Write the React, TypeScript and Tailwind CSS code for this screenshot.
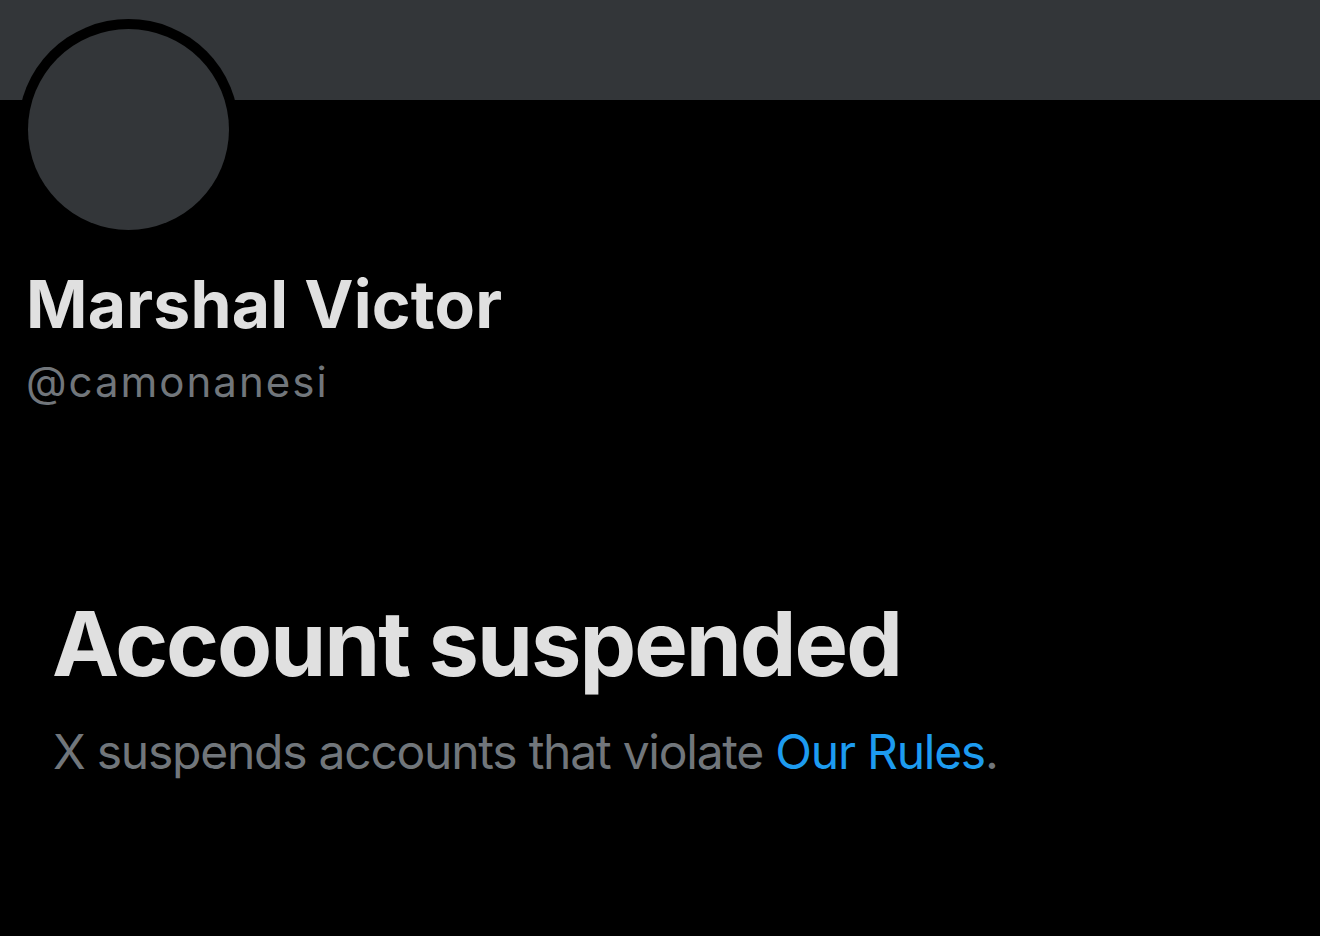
export default function App() {
  return (
    <div className="w-[1320px] h-[936px] bg-black overflow-hidden" style={{ fontFamily: 'Inter, "Noto Sans", sans-serif' }}>
      <div className="h-[100px] bg-[#333639]" />
      <div className="pl-[18px] -mt-[81px]">
        <div className="w-[221px] h-[221px] rounded-full bg-black p-[10px]">
          <div className="w-full h-full rounded-full bg-[#333639]" />
        </div>
      </div>
      <div className="pl-[26px] pt-[28px]">
        <div className="text-[66px] leading-[72px] font-bold text-[#e0e0e0] tracking-[0.2px]">Marshal Victor</div>
        <div className="mt-[18px] text-[42px] leading-[48px] text-[#71767b] tracking-[2px]">@camonanesi</div>
      </div>
      <div className="pl-[52px] pt-[186px]">
        <div className="text-[90px] leading-[104px] font-bold text-[#e0e0e0] tracking-[-2px]">Account suspended</div>
        <div className="mt-[28px] ml-[1px] text-[48px] leading-[56px] text-[#71767b] tracking-[-1.25px]">
          X suspends accounts that violate <span className="text-[#1d9bf0]">Our Rules</span>.
        </div>
      </div>
    </div>
  );
}
